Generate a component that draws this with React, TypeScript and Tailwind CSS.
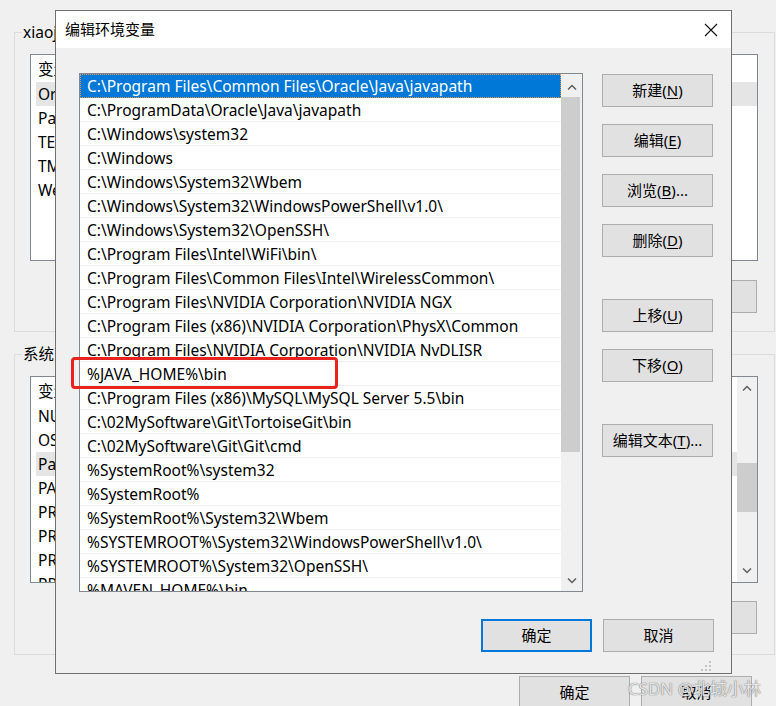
import type { ReactNode } from 'react';

const FONT = "font-['Noto_Sans','Noto_Sans_CJK_SC',sans-serif]";

const paths = [
  'C:\\Program Files\\Common Files\\Oracle\\Java\\javapath',
  'C:\\ProgramData\\Oracle\\Java\\javapath',
  'C:\\Windows\\system32',
  'C:\\Windows',
  'C:\\Windows\\System32\\Wbem',
  'C:\\Windows\\System32\\WindowsPowerShell\\v1.0\\',
  'C:\\Windows\\System32\\OpenSSH\\',
  'C:\\Program Files\\Intel\\WiFi\\bin\\',
  'C:\\Program Files\\Common Files\\Intel\\WirelessCommon\\',
  'C:\\Program Files\\NVIDIA Corporation\\NVIDIA NGX',
  'C:\\Program Files (x86)\\NVIDIA Corporation\\PhysX\\Common',
  'C:\\Program Files\\NVIDIA Corporation\\NVIDIA NvDLISR',
  '%JAVA_HOME%\\bin',
  'C:\\Program Files (x86)\\MySQL\\MySQL Server 5.5\\bin',
  'C:\\02MySoftware\\Git\\TortoiseGit\\bin',
  'C:\\02MySoftware\\Git\\Git\\cmd',
  '%SystemRoot%\\system32',
  '%SystemRoot%',
  '%SystemRoot%\\System32\\Wbem',
  '%SYSTEMROOT%\\System32\\WindowsPowerShell\\v1.0\\',
  '%SYSTEMROOT%\\System32\\OpenSSH\\',
  '%MAVEN_HOME%\\bin',
];

const userVars = ['Oracle_Home', 'Path', 'TEMP', 'TMP', 'WebStorm'];
const sysVars = [
  'NUMBER_OF_PROCESSORS',
  'OS',
  'Path',
  'PATHEXT',
  'PROCESSOR_ARCHITECTURE',
  'PROCESSOR_IDENTIFIER',
  'PROCESSOR_LEVEL',
  'PROCESSOR_REVISION',
];

function Chevron({ up }: { up?: boolean }) {
  return (
    <svg width="10" height="6" viewBox="0 0 10 6">
      <polyline
        points={up ? '1,5.5 5,1.5 9,5.5' : '1,0.5 5,4.5 9,0.5'}
        fill="none"
        stroke="#606060"
        strokeWidth="1.5"
      />
    </svg>
  );
}

// button label with the underlined access key, e.g. 新建(N)
function Btn({
  text,
  hotkey,
  tail = '',
  primary,
  className = '',
}: {
  text: string;
  hotkey?: string;
  tail?: string;
  primary?: boolean;
  className?: string;
}) {
  return (
    <div
      className={`h-[33px] w-[111px] flex items-center justify-center bg-[#e1e1e1] text-[15px] text-black ${
        primary ? 'border-2 border-[#0078d7]' : 'border border-[#adadad]'
      } ${className}`}
    >
      <span>{text}</span>
      {hotkey && (
        <span>
          (<span className="underline underline-offset-2">{hotkey}</span>){tail}
        </span>
      )}
    </div>
  );
}

function GroupBox({ label, className, children }: { label: string; className: string; children: ReactNode }) {
  return (
    <div className={`relative w-[761px] border border-[#dcdcdc] ${className}`}>
      <span className="absolute left-[7px] top-[-11px] bg-[#f0f0f0] px-px text-[15.5px] leading-[20px]">{label}</span>
      {children}
    </div>
  );
}

function VarList({ names, selected, withScroll }: { names: string[]; selected: number; withScroll?: boolean }) {
  return (
    <div className="flex h-[207px] overflow-hidden border border-[#828790] bg-white">
      <div className="flex-1">
        <div className="h-[27px] pl-[7px] pt-[2px] flex items-center text-[15.5px]">变量</div>
        {names.map((n, i) => (
          <div
            key={n}
            className={`h-[24px] pt-[1px] flex items-center text-[15.5px] ${
              i === selected ? 'bg-[#e5e5e5] ml-[5px] pl-[2px]' : 'pl-[7px]'
            }`}
          >
            {n}
          </div>
        ))}
      </div>
      {withScroll && (
        <div className="w-[20px] flex flex-col items-center bg-[#f0f0f0]">
          <div className="h-[22px] flex items-center"><Chevron up /></div>
          <div className="flex-1 w-full pt-[64px]">
            <div className="h-[49px] w-full bg-[#cdcdcd]" />
          </div>
          <div className="h-[22px] flex items-center"><Chevron /></div>
        </div>
      )}
    </div>
  );
}

export default function App() {
  return (
    <div className={`relative w-[776px] h-[706px] overflow-hidden bg-[#f0f0f0] text-black ${FONT}`}>
      {/* window behind the dialog */}
      <div className="pl-[14px] pt-[32px]">
        <GroupBox label="xiaojie 的用户变量(U)" className="h-[300px]">
          <div className="pt-[21px] pl-[15px] pr-[16px]">
            <VarList names={userVars} selected={0} />
            <div className="mt-[19px] flex justify-end gap-[12px] pr-px">
              <Btn text="新建" hotkey="N" tail="..." />
              <Btn text="编辑" hotkey="E" tail="..." />
              <Btn text="删除" hotkey="D" className="w-[27px]" />
            </div>
          </div>
        </GroupBox>
        <GroupBox label="系统变量(S)" className="mt-[22px] h-[301px]">
          <div className="pt-[21px] pl-[15px] pr-[16px]">
            <VarList names={sysVars} selected={2} withScroll />
            <div className="mt-[18px] flex justify-end gap-[12px] pr-px">
              <Btn text="新建" hotkey="W" tail="..." />
              <Btn text="编辑" hotkey="I" tail="..." />
              <Btn text="删除" hotkey="L" className="w-[27px]" />
            </div>
          </div>
        </GroupBox>
        <div className="mt-[21px] flex gap-[11px] pl-[505px]">
          <Btn text="确定" className="w-[111px]" />
          <Btn text="取消" className="w-[111px]" />
        </div>
      </div>

      {/* 编辑环境变量 dialog */}
      <div className="absolute left-[55px] top-[10px] w-[677px] h-[664px] flex flex-col border border-[#707070] bg-[#f0f0f0]">
        <div className="h-[37px] shrink-0 flex items-center justify-between bg-white pl-[9px] pr-[13px]">
          <span className="text-[15px]">编辑环境变量</span>
          <svg width="14" height="14" viewBox="0 0 14 14">
            <path d="M1 1 L13 13 M13 1 L1 13" stroke="#111" strokeWidth="1.1" />
          </svg>
        </div>
        <div className="flex-1 flex flex-col pt-[25px] pl-[23px] pr-[17px]">
          <div className="flex gap-[19px]">
            <div className="w-[504px] h-[519px] flex border border-[#828790] bg-white overflow-hidden">
              <div className="flex-1 overflow-hidden">
                {paths.map((p, i) => (
                  <div
                    key={p}
                    className={`h-[24px] pl-[7px] pt-[2px] flex items-center text-[15.5px] whitespace-nowrap ${
                      i === 0
                        ? 'bg-[#0078d7] text-white outline outline-1 outline-dotted outline-offset-[-1px] outline-[#e09a50]'
                        : 'border-b border-[#f0f0f0]'
                    }`}
                  >
                    {p}
                  </div>
                ))}
              </div>
              <div className="w-[21px] shrink-0 flex flex-col bg-[#f0f0f0]">
                <div className="h-[23px] pt-[3px] flex items-center justify-center"><Chevron up /></div>
                <div className="h-[355px] w-[19px] bg-[#cdcdcd]" />
                <div className="flex-1" />
                <div className="h-[23px] pt-[2px] flex items-center justify-center"><Chevron /></div>
              </div>
            </div>
            <div className="flex flex-col pt-px">
              <Btn text="新建" hotkey="N" />
              <Btn text="编辑" hotkey="E" className="mt-[17px]" />
              <Btn text="浏览" hotkey="B" tail="..." className="mt-[17px]" />
              <Btn text="删除" hotkey="D" className="mt-[17px]" />
              <Btn text="上移" hotkey="U" className="mt-[42px]" />
              <Btn text="下移" hotkey="O" className="mt-[17px]" />
              <Btn text="编辑文本" hotkey="T" tail="..." className="mt-[42px]" />
            </div>
          </div>
          <div className="mt-[27px] flex justify-end gap-[11px]">
            <Btn text="确定" primary />
            <Btn text="取消" />
          </div>
          <div className="flex-1 flex items-end justify-end pb-[2px] pr-[2px]">
            <svg width="11" height="10" viewBox="0 0 11 10" fill="#c4c4c4">
              <rect x="8" y="0" width="2" height="2" />
              <rect x="4" y="4" width="2" height="2" />
              <rect x="8" y="4" width="2" height="2" />
              <rect x="0" y="8" width="2" height="2" />
              <rect x="4" y="8" width="2" height="2" />
              <rect x="8" y="8" width="2" height="2" />
            </svg>
          </div>
        </div>
      </div>

      {/* annotation around %JAVA_HOME%\bin */}
      <div className="absolute left-[71px] top-[357px] w-[267px] h-[32px] rounded-[4px] border-[3px] border-[#e8221c]" />

      {/* watermark */}
      <div className="absolute right-[15px] bottom-[5px] text-[17px] text-white/80 [text-shadow:0_0_1px_#777,0_0_1px_#777]">
        CSDN @北城小林
      </div>
    </div>
  );
}
